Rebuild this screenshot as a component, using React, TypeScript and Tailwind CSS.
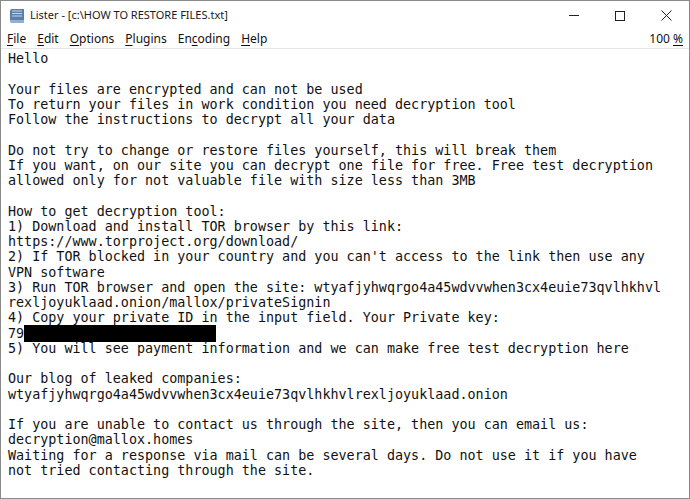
import React from "react";

const lines: string[] = [
  "Hello",
  "",
  "Your files are encrypted and can not be used",
  "To return your files in work condition you need decryption tool",
  "Follow the instructions to decrypt all your data",
  "",
  "Do not try to change or restore files yourself, this will break them",
  "If you want, on our site you can decrypt one file for free. Free test decryption",
  "allowed only for not valuable file with size less than 3MB",
  "",
  "How to get decryption tool:",
  "1) Download and install TOR browser by this link:",
  "https://www.torproject.org/download/",
  "2) If TOR blocked in your country and you can't access to the link then use any",
  "VPN software",
  "3) Run TOR browser and open the site: wtyafjyhwqrgo4a45wdvvwhen3cx4euie73qvlhkhvl",
  "rexljoyuklaad.onion/mallox/privateSignin",
  "4) Copy your private ID in the input field. Your Private key:",
  "__KEY__",
  "5) You will see payment information and we can make free test decryption here",
  "",
  "Our blog of leaked companies:",
  "wtyafjyhwqrgo4a45wdvvwhen3cx4euie73qvlhkhvlrexljoyuklaad.onion",
  "",
  "If you are unable to contact us through the site, then you can email us:",
  "decryption@mallox.homes",
  "Waiting for a response via mail can be several days. Do not use it if you have",
  "not tried contacting through the site.",
];

function Menu({ u, rest, pre }: { u: string; rest: string; pre?: string }) {
  return (
    <span>
      {pre}
      <span className="underline underline-offset-2">{u}</span>
      {rest}
    </span>
  );
}

export default function App() {
  return (
    <div className="w-[690px] h-[499px] bg-white border border-[#8a8a8a] flex flex-col overflow-hidden">
      {/* title bar */}
      <div className="h-[29px] flex items-center shrink-0">
        <svg width="18" height="18" viewBox="0 0 18 18" className="ml-[7px] mr-[4px]">
          <path d="M2 4 Q2 2 4 2 L16 2 L16 13 L4 13 Q2 13 2 15 Z" fill="#5b7fa8" />
          <path d="M2 15 Q2 13 4 13 L16 13 L16 16 L4 16 Q2 16 2 15 Z" fill="#8fb0d2" />
          <path d="M4 4 L14 4" stroke="#c7d6e6" strokeWidth="1" />
          <path d="M4 6.5 L14 6.5" stroke="#c7d6e6" strokeWidth="1" />
          <path d="M4 9 L14 9" stroke="#c7d6e6" strokeWidth="1" />
        </svg>
        <span
          className="text-[11px] text-[#1a1a1a]"
          style={{ fontFamily: '"Noto Sans", "Liberation Sans", sans-serif' }}
        >
          Lister - [c:\HOW TO RESTORE FILES.txt]
        </span>
        <div className="ml-auto flex items-center h-full">
          <div className="w-[46px] h-full flex items-center justify-center">
            <div className="w-[10px] h-px bg-[#222]" />
          </div>
          <div className="w-[46px] h-full flex items-center justify-center">
            <div className="w-[10px] h-[10px] border border-[#222]" />
          </div>
          <div className="w-[46px] h-full flex items-center justify-center">
            <svg width="11" height="11" viewBox="0 0 11 11">
              <path d="M0.5 0.5 L10.5 10.5 M10.5 0.5 L0.5 10.5" stroke="#222" strokeWidth="1" />
            </svg>
          </div>
        </div>
      </div>
      {/* menu bar */}
      <div
        className="h-[19px] flex items-center text-[12px] text-[#111] shrink-0 border-b border-[#e6e6e6]"
        style={{ fontFamily: '"Noto Sans", "Liberation Sans", sans-serif' }}
      >
        <div className="flex gap-[11px] pl-[6px]">
          <Menu u="F" rest="ile" />
          <Menu u="E" rest="dit" />
          <Menu u="O" rest="ptions" />
          <Menu u="P" rest="lugins" />
          <Menu pre="En" u="c" rest="oding" />
          <Menu u="H" rest="elp" />
        </div>
        <div className="ml-auto pr-[6px]">
          100 <span className="underline underline-offset-2">%</span>
        </div>
      </div>
      {/* text */}
      <div
        className="pl-[7px] pt-[2px] text-[13.4px] leading-[15.25px] text-[#111] whitespace-pre"
        style={{ fontFamily: '"DejaVu Sans Mono", monospace' }}
      >
        {lines.map((l, i) =>
          l === "__KEY__" ? (
            <div key={i} className="flex items-center h-[15.25px]">
              <span>79</span>
              <span className="inline-block w-[192px] h-[17px] bg-black" />
            </div>
          ) : (
            <div key={i} className="h-[15.25px]">{l || " "}</div>
          )
        )}
      </div>
    </div>
  );
}
